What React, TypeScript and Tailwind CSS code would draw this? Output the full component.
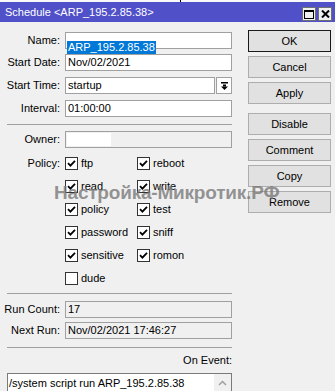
import React from "react";

const font = { fontFamily: '"Liberation Sans", Arial, sans-serif' };

function Check({ checked }: { checked: boolean }) {
  return (
    <div className="w-[13px] h-[13px] bg-white border border-[#333333] flex items-center justify-center shrink-0">
      {checked && (
        <svg width="9" height="9" viewBox="0 0 9 9">
          <path d="M1 4.2 L3.4 6.6 L8 1.8" stroke="#000" strokeWidth="1.8" fill="none" />
        </svg>
      )}
    </div>
  );
}

function CB({ label, checked = true }: { label: string; checked?: boolean }) {
  return (
    <div className="flex items-center gap-[3px] h-[17px]">
      <Check checked={checked} />
      <span className="text-[11px] text-black">{label}</span>
    </div>
  );
}

function Label({ children }: { children: React.ReactNode }) {
  return <div className="w-[60px] text-right text-[11px] text-black leading-[17px] shrink-0">{children}</div>;
}

function Field({ value, readOnly = false }: { value: string; readOnly?: boolean }) {
  return (
    <div
      className={`ml-[5px] w-[167px] h-[17px] border border-[#a0a0a0] pl-[2px] text-[11px] leading-[15px] text-black ${
        readOnly ? "bg-[#f0f0f0]" : "bg-white"
      }`}
    >
      {value}
    </div>
  );
}

function Sep() {
  return <div className="ml-[7px] w-[225px] h-[1px] bg-[#a0a0a0]" />;
}

function Btn({ children, def = false }: { children: React.ReactNode; def?: boolean }) {
  return (
    <div
      className={`w-[83px] h-[22px] bg-[#e1e1e1] border ${
        def ? "border-[#1a1a1a]" : "border-[#adadad]"
      } flex items-center justify-center text-[11px] text-black`}
    >
      {children}
    </div>
  );
}

export default function App() {
  return (
    <div className="w-[335px] h-[391px] bg-[#f0f0f0] overflow-hidden relative" style={font}>
      {/* top strip */}
      <div className="h-[2px] bg-[#f8f8f8] relative">
        <div className="absolute left-[180px] top-0 w-[1px] h-[2px] bg-black" />
      </div>
      {/* title bar */}
      <div className="h-[20px] bg-[#5050c8] flex items-start justify-between pl-[5px] pr-[3px]">
        <span className="text-white text-[11px] leading-[20px]">Schedule &lt;ARP_195.2.85.38&gt;</span>
        <div className="flex gap-[2px] pt-[5px]">
          <div className="w-[14px] h-[14px] bg-[#f0f0f0] border border-[#707070] flex items-center justify-center">
            <svg width="10" height="9" viewBox="0 0 10 9">
              <rect x="0.5" y="0.5" width="9" height="8" fill="none" stroke="#000" />
              <rect x="0" y="0" width="10" height="2" fill="#000" />
            </svg>
          </div>
          <div className="w-[14px] h-[14px] bg-[#f0f0f0] border border-[#707070] flex items-center justify-center">
            <svg width="9" height="8" viewBox="0 0 9 8">
              <path d="M1 0.5 L8 7.5 M8 0.5 L1 7.5" stroke="#000" strokeWidth="2" />
            </svg>
          </div>
        </div>
      </div>

      <div className="flex">
        {/* left column */}
        <div className="w-[240px] flex flex-col">
          <div className="flex mt-[10px]">
            <Label>Name:</Label>
            <div className="ml-[5px] w-[167px] h-[17px] border border-[#a0a0a0] bg-white pl-[1px] pt-[1px]">
              <span className="inline-block bg-[#0078d7] text-white text-[11px] leading-[13px] px-[1px]">ARP_195.2.85.38</span>
            </div>
          </div>
          <div className="flex mt-[5px]">
            <Label>Start Date:</Label>
            <Field value="Nov/02/2021" />
          </div>
          <div className="flex mt-[6px]">
            <Label>Start Time:</Label>
            <div className="ml-[5px] w-[150px] h-[17px] border border-[#a0a0a0] bg-white pl-[2px] text-[11px] leading-[15px] text-black">
              startup
            </div>
            <div className="ml-[1px] w-[16px] h-[17px] border border-[#a0a0a0] bg-white flex items-center justify-center">
              <svg width="7" height="8" viewBox="0 0 7 8">
                <rect x="0" y="0" width="7" height="1.5" fill="#000" />
                <rect x="2" y="2.5" width="3" height="2" fill="#000" />
                <polygon points="0,4.5 7,4.5 3.5,8" fill="#000" />
              </svg>
            </div>
          </div>
          <div className="flex mt-[6px]">
            <Label>Interval:</Label>
            <Field value="01:00:00" />
          </div>
          <div className="mt-[7px]">
            <Sep />
          </div>
          <div className="flex mt-[6px]">
            <Label>Owner:</Label>
            <div className="ml-[5px] w-[167px] h-[17px] border border-[#a0a0a0] bg-[#f0f0f0] p-[1px]">
              <div className="w-[44px] h-[13px] bg-white" />
            </div>
          </div>
          <div className="flex mt-[7px]">
            <Label>Policy:</Label>
            <div className="ml-[5px] grid grid-cols-[72px_80px] gap-y-[6px]">
              <CB label="ftp" />
              <CB label="reboot" />
              <CB label="read" />
              <CB label="write" />
              <CB label="policy" />
              <CB label="test" />
              <CB label="password" />
              <CB label="sniff" />
              <CB label="sensitive" />
              <CB label="romon" />
              <CB label="dude" checked={false} />
            </div>
          </div>
          <div className="mt-[6px]">
            <Sep />
          </div>
          <div className="flex mt-[7px]">
            <Label>Run Count:</Label>
            <Field value="17" readOnly />
          </div>
          <div className="flex mt-[4px]">
            <Label>Next Run:</Label>
            <Field value="Nov/02/2021 17:46:27" readOnly />
          </div>
          <div className="mt-[8px]">
            <Sep />
          </div>
          <div className="ml-[7px] w-[225px] text-right text-[11px] leading-[14px] mt-[5px] text-black">On Event:</div>
          <div className="ml-[7px] mt-[6px] w-[225px] h-[40px] border border-[#7a7a7a] bg-white flex">
            <div className="flex-1 pl-[1px] text-[11px] leading-[18px] text-black">/system script run ARP_195.2.85.38</div>
            <div className="w-[17px] bg-[#f0f0f0] flex justify-center pt-[6px]">
              <svg width="9" height="6" viewBox="0 0 9 6">
                <path d="M1 5 L4.5 1.5 L8 5" stroke="#a0a0a0" strokeWidth="1.5" fill="none" />
              </svg>
            </div>
          </div>
        </div>

        {/* right column */}
        <div className="ml-[8px] mt-[8px] flex flex-col gap-[4px]">
          <Btn def>OK</Btn>
          <Btn>Cancel</Btn>
          <Btn>Apply</Btn>
          <div className="mt-[5px]">
            <Btn>Disable</Btn>
          </div>
          <Btn>Comment</Btn>
          <Btn>Copy</Btn>
          <Btn>Remove</Btn>
        </div>
      </div>

      {/* watermark overlay */}
      <div className="absolute left-[54px] top-[181px] text-[19px] tracking-[-0.2px] font-bold text-[rgba(120,120,120,0.8)] leading-[24px] whitespace-nowrap pointer-events-none">
        Настройка-Микротик.РФ
      </div>
    </div>
  );
}
